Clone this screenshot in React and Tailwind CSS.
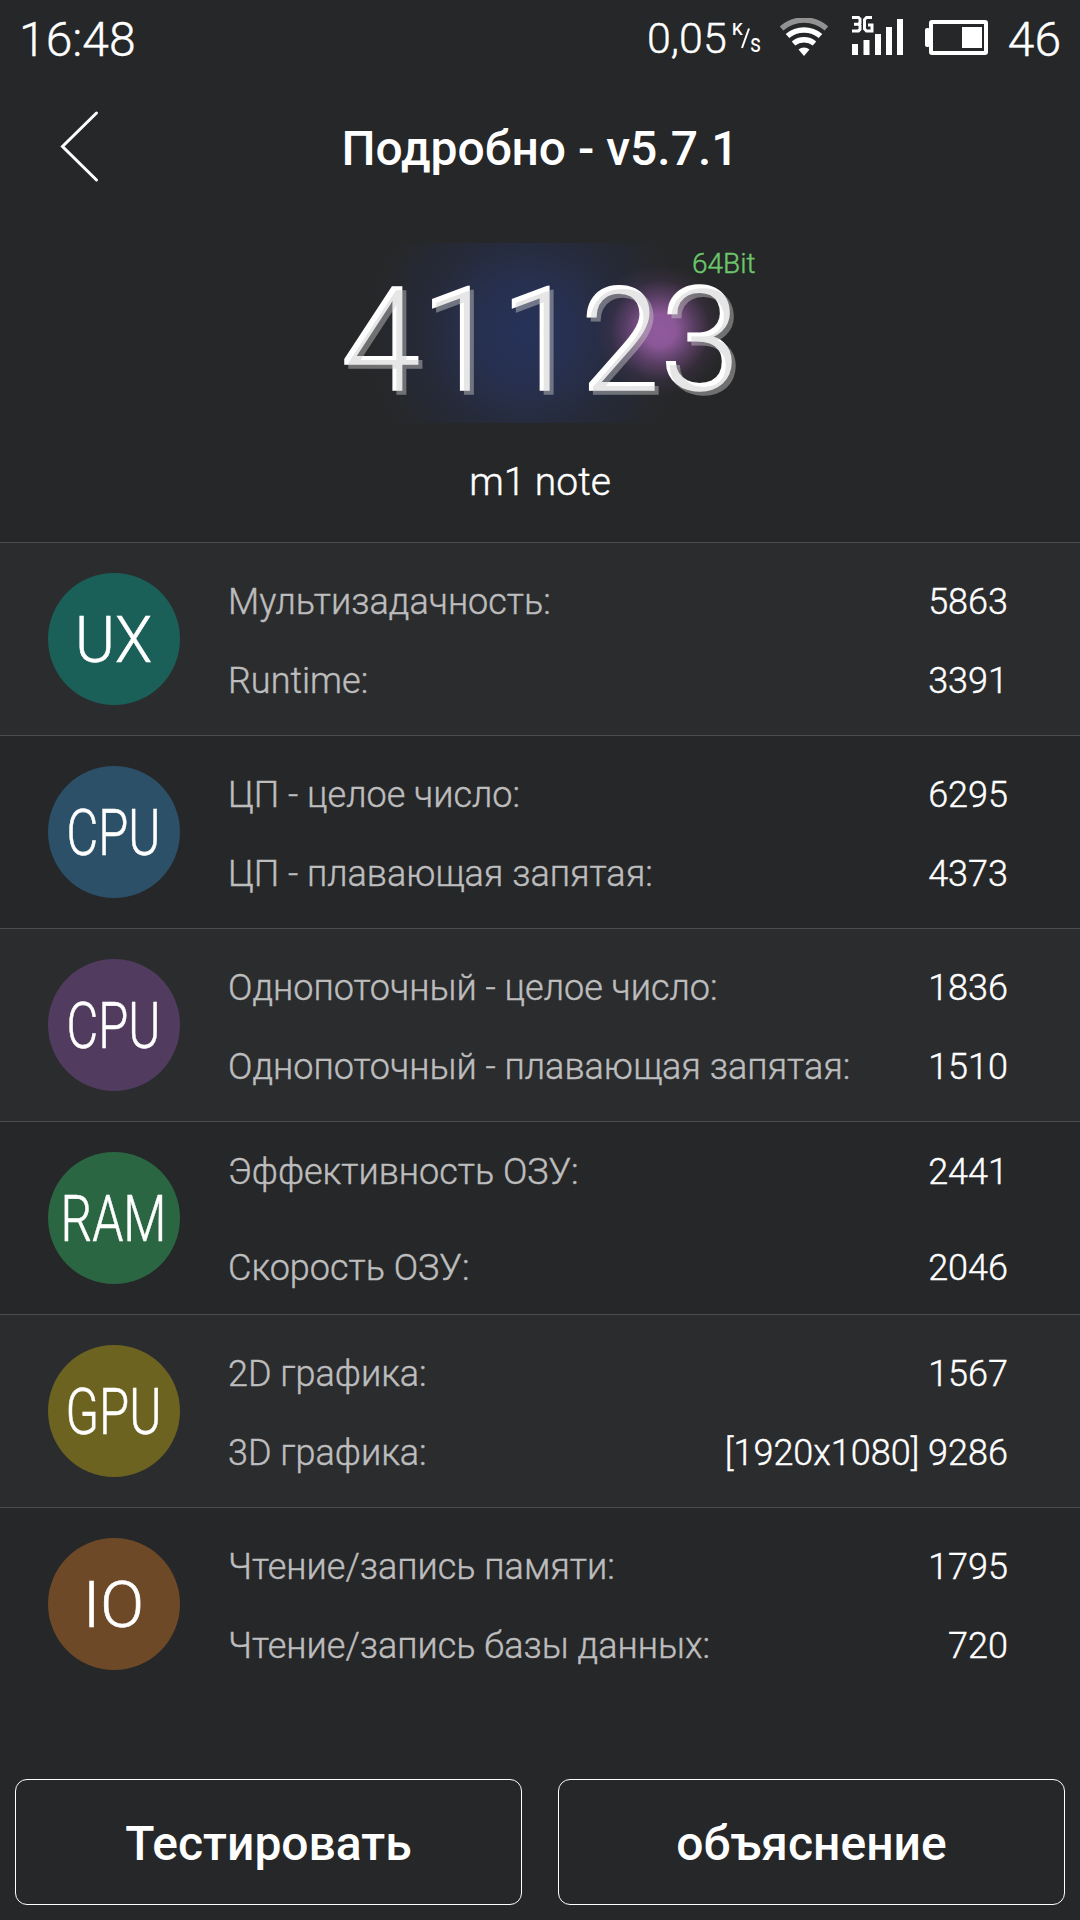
const groups = [
    {
        name: 'UX',
        width: 77,
        color: 'bg-[#1a6059]',
        rows: [
            { label: 'Мультизадачность:', value: '5863' },
            { label: 'Runtime:', value: '3391' },
        ],
    },
    {
        name: 'CPU',
        width: 94,
        color: 'bg-[#2b5068]',
        rows: [
            { label: 'ЦП - целое число:', value: '6295' },
            { label: 'ЦП - плавающая запятая:', value: '4373' },
        ],
    },
    {
        name: 'CPU',
        width: 94,
        color: 'bg-[#513b5e]',
        rows: [
            { label: 'Однопоточный - целое число:', value: '1836' },
            { label: 'Однопоточный - плавающая запятая:', value: '1510' },
        ],
    },
    {
        name: 'RAM',
        width: 106,
        color: 'bg-[#2b6643]',
        spread: true,
        rows: [
            { label: 'Эффективность ОЗУ:', value: '2441' },
            { label: 'Скорость ОЗУ:', value: '2046' },
        ],
    },
    {
        name: 'GPU',
        width: 96,
        color: 'bg-[#6d6320]',
        rows: [
            { label: '2D графика:', value: '1567' },
            { label: '3D графика:', value: '[1920x1080] 9286' },
        ],
    },
    {
        name: 'IO',
        width: 61,
        color: 'bg-[#6d4928]',
        rows: [
            { label: 'Чтение/запись памяти:', value: '1795' },
            { label: 'Чтение/запись базы данных:', value: '720' },
        ],
    },
];

const WifiIcon = () => (
    <svg width="48" height="38" viewBox="0 0 48 38" fill="none" stroke="#fff">
        <path d="M1.5 10.5a34 34 0 0 1 45 0" stroke="#929293" strokeWidth="5.5" />
        <path d="M7.5 18a25.5 25.5 0 0 1 33 0" strokeWidth="5.5" />
        <path d="M13.5 25.5a16.5 16.5 0 0 1 21 0" strokeWidth="5.5" />
        <path d="M18.5 31.5a8.5 8.5 0 0 1 11 0L24 38z" fill="#fff" stroke="none" />
    </svg>
);

const SignalIcon = () => (
    <svg width="52" height="40" viewBox="0 0 52 40">
        <g fill="#fff">
            <rect x="0" y="28" width="6" height="11" />
            <rect x="11.5" y="24" width="6" height="15" />
            <rect x="23" y="18" width="6" height="21" />
            <rect x="34" y="11" width="6" height="28" />
            <rect x="45" y="3" width="6" height="36" />
        </g>
        <g fill="none" stroke="#fff" strokeWidth="3">
            <path d="M0 1.5h6.5l1.5 1.5v4l-1.5 1.2l1.5 1.2v4l-1.5 1.5H0M2 8.2h4.5" />
            <path d="M20 1.5h-5.5l-2 2v9.5l2 2h5.5v-6h-4" />
        </g>
    </svg>
);

const BatteryIcon = () => (
    <svg width="64" height="36" viewBox="0 0 64 36">
        <rect x="6" y="2" width="55" height="31" rx="1" fill="none" stroke="#fff" strokeWidth="4" />
        <rect x="0" y="8" width="5" height="19" rx="2" fill="#fff" />
        <rect x="37" y="7" width="20" height="21" fill="#fff" />
    </svg>
);

const StatusBar = () => (
    <div className="flex h-20 items-start justify-between pt-3 pr-[19px] pl-[19px] text-[48px] leading-[56px] font-light [-webkit-text-stroke:0.4px]">
        <span>16:48</span>
        <div className="flex items-start">
            <span className="mt-[-2px] text-[43px]">0,05</span>
            <svg className="mt-2 mr-[18px] ml-[5px] overflow-visible" width="30" height="36" viewBox="0 0 30 36" fill="#fff">
                <text x="0" y="15" fontSize="17" fontWeight="500">K</text>
                <path d="M10 28L17 8.5" stroke="#fff" strokeWidth="2" />
                <text x="18" y="32" fontSize="26" fontWeight="400" textLength="11" lengthAdjust="spacingAndGlyphs">s</text>
            </svg>
            <div className="mt-1.5 mr-6"><WifiIcon /></div>
            <div className="mt-1 mr-[21px]"><SignalIcon /></div>
            <div className="mt-2 mr-[19px]"><BatteryIcon /></div>
            <span>46</span>
        </div>
    </div>
);

const Header = () => (
    <div className="relative flex h-[163px] justify-center pt-[41px]">
        <svg className="absolute top-[29px] left-[60px]" width="42" height="76" viewBox="0 0 42 76" fill="none">
            <path d="M36.5 4L2.5 37.5L36.5 71" stroke="#fff" strokeWidth="3" strokeLinecap="round" />
        </svg>
        <h1 className="text-[48px] leading-[56px] font-medium">Подробно - v5.7.1</h1>
    </div>
);

const Score = () => (
    <div className="flex h-[299px] flex-col items-center">
        <div className="relative flex h-[180px] w-[440px] justify-center bg-[radial-gradient(circle_at_340px_87px,#90599c_0,#8c5898_16px,rgba(110,72,122,0.7)_34px,rgba(80,55,90,0.3)_50px,transparent_66px),radial-gradient(ellipse_160px_160px_at_206px_90px,#27325a_0,#27304f_50px,rgba(38,44,65,0.7)_100px,transparent_160px)]">
            <div
                data-score="41123"
                className="relative mt-[14px] h-[168px] text-[144px] leading-[168px] font-light [-webkit-text-stroke:1.5px] after:absolute after:top-1 after:left-1 after:text-[#cacaca] after:opacity-45 after:content-[attr(data-score)]"
            >
                41123
            </div>
            <span className="absolute top-[4px] left-[372px] text-[28px] leading-[34px] font-light text-[#6cc76c] [-webkit-text-stroke:0.4px]">64Bit</span>
        </div>
        <p className="mt-[34px] text-[39px] leading-[50px] font-light [-webkit-text-stroke:0.4px]">m1 note</p>
    </div>
);

const Badge = ({ name, width, color }) => (
    <div className={`mt-[30px] ml-12 h-[132px] w-[132px] shrink-0 rounded-full ${color}`}>
        <svg className="overflow-visible" width="132" height="132" viewBox="0 0 132 132">
            <text
                x="65.5"
                y="89"
                fill="#fff"
                stroke="#fff"
                strokeWidth="0.6"
                fontSize="64"
                fontWeight="300"
                textAnchor="middle"
                textLength={width}
                lengthAdjust="spacingAndGlyphs"
            >
                {name}
            </text>
        </svg>
    </div>
);

const Group = ({ group, shaded }) => (
    <div className={`flex h-[193px] border-t border-[#4c4d4f] ${shaded ? 'bg-[#2b2c2e]' : ''}`}>
        <Badge name={group.name} width={group.width} color={group.color} />
        <div className={`ml-12 flex-1 pr-[72px] text-[36px] leading-[42px] font-light [-webkit-text-stroke:0.4px] ${group.spread ? 'mt-[29px] space-y-[54px]' : 'mt-[38px] space-y-[37px]'}`}>
            {group.rows.map(row => (
                <div key={row.label} className="flex justify-between">
                    <span className="text-[#bdbdbe]">{row.label}</span>
                    <span>{row.value}</span>
                </div>
            ))}
        </div>
    </div>
);

const App = () => (
    <div className="flex h-[1920px] w-[1080px] flex-col overflow-hidden bg-[#262728] font-[Roboto,sans-serif] text-white">
        <StatusBar />
        <Header />
        <Score />
        {groups.map((group, i) => (
            <Group key={i} group={group} shaded={i % 2 === 0} />
        ))}
        <div className="mt-[79px] flex gap-9 px-[15px]">
            {['Тестировать', 'объяснение'].map(label => (
                <button key={label} className="h-[126px] flex-1 rounded-xl border border-white pt-[3px] text-[48px] leading-[56px] font-medium">
                    {label}
                </button>
            ))}
        </div>
    </div>
);

export default App;
